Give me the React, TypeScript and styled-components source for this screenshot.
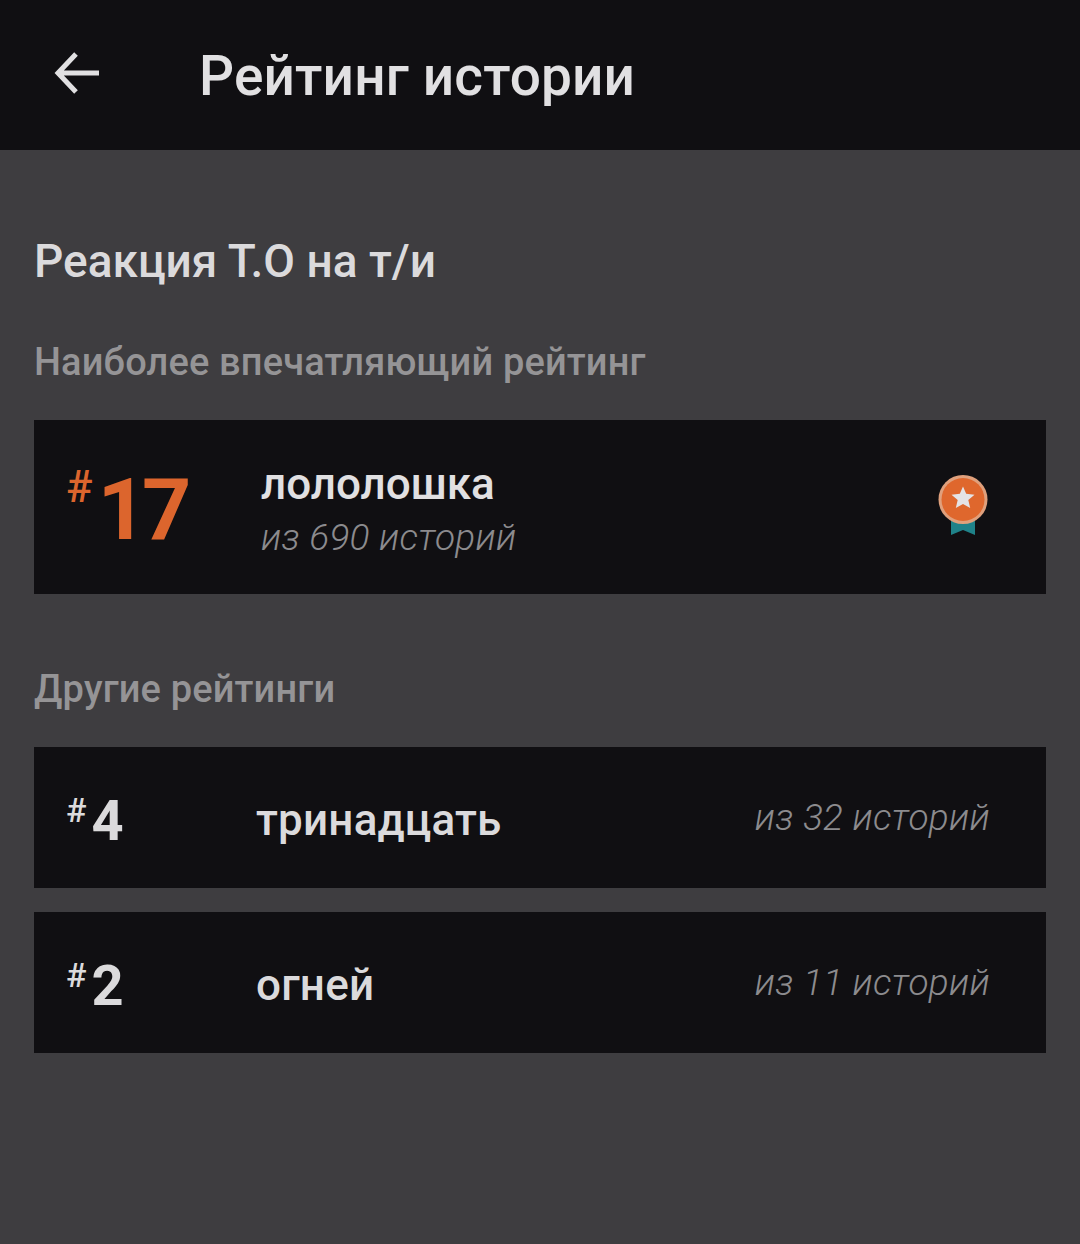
import React from 'react';
import styled, {createGlobalStyle} from 'styled-components'

const GlobalStyle = createGlobalStyle`
  html, body {
    margin: 0;
    padding: 0;
    background: #3e3d40;
  }
  body {
    font-family: Roboto, "Noto Sans", sans-serif;
  }
`

const Page = styled.div`
  width: 1080px;
  height: 1244px;
  background: #3e3d40;
  overflow: hidden;
`

const Header = styled.header`
  height: 150px;
  background: #100f12;
  display: flex;
  align-items: center;
  padding-left: 54px;
  box-sizing: border-box;
`

const BackIcon = styled.svg`
  width: 48px;
  height: 48px;
  flex: none;
  margin-top: -5px;
`

const Title = styled.h1`
  margin: 1px 0 0 97px;
  font-size: 55px;
  letter-spacing: 0.15px;
  font-weight: 500;
  color: #e1e0e2;
  line-height: 60px;
`

const Content = styled.main`
  padding: 81px 34px 0;
`

const StoryName = styled.h2`
  margin: 0;
  font-size: 46px;
  line-height: 60px;
  font-weight: 500;
  color: #dbdadc;
`

const SectionLabel = styled.div<{ $top: number }>`
  margin-top: ${({$top}) => $top}px;
  font-size: 38px;
  letter-spacing: 0.15px;
  line-height: 44px;
  font-weight: 500;
  color: #959496;
`

const BestCard = styled.div`
  margin-top: 36px;
  height: 174px;
  background: #100f12;
  display: flex;
  align-items: center;
  padding: 0 58px 0 33px;
`

const Rank = styled.div<{ $big?: boolean }>`
  width: ${({$big}) => ($big ? 194 : 190)}px;
  flex: none;
  display: flex;
  align-items: flex-start;
  color: ${({$big}) => ($big ? '#dc652d' : '#dbdadc')};
`

const Hash = styled.span<{ $big?: boolean }>`
  font-size: ${({$big}) => ($big ? 44 : 34)}px;
  line-height: ${({$big}) => ($big ? 44 : 36)}px;
  font-weight: 500;
  margin-left: -1px;
  margin-right: ${({$big}) => ($big ? 5 : 5)}px;
  margin-top: ${({$big}) => ($big ? 7 : 9)}px;
`

const RankNumber = styled.span<{ $big?: boolean }>`
  font-size: ${({$big}) => ($big ? 86 : 56)}px;
  letter-spacing: ${({$big}) => ($big ? -5 : 0)}px;
  line-height: ${({$big}) => ($big ? 92 : 62)}px;
  font-weight: 700;
  margin-top: ${({$big}) => ($big ? 6 : 7)}px;
`

const BestText = styled.div`
  flex: 1;
  display: flex;
  flex-direction: column;
  padding-top: 6px;
`

const BestName = styled.div`
  font-size: 44px;
  line-height: 52px;
  font-weight: 500;
  color: #e1e0e2;
`

const OfStories = styled.div<{ $best?: boolean }>`
  font-size: 37px;
  line-height: 48px;
  letter-spacing: 0.3px;
  font-weight: 300;
  font-style: italic;
  color: #8c8b8e;
  margin-top: ${({$best}) => ($best ? 4 : 0)}px;
`

const Medal = styled.svg`
  width: 50px;
  height: 62px;
  flex: none;
  margin-top: -2px;
`

const List = styled.div`
  margin-top: 36px;
  display: flex;
  flex-direction: column;
  gap: 24px;
`

const Row = styled.div`
  height: 141px;
  background: #100f12;
  display: flex;
  align-items: center;
  padding: 0 56px 0 33px;
`

const RowName = styled.div`
  flex: 1;
  font-size: 44px;
  letter-spacing: 0.2px;
  font-weight: 500;
  color: #dbdadc;
  line-height: 52px;
  margin-top: 5px;
  margin-left: -1px;
`

const items = [
    {rank: 4, name: 'тринадцать', total: 'из 32 историй'},
    {rank: 2, name: 'огней', total: 'из 11 историй'},
]

const App: React.FC = () => {
    return (
        <Page>
            <GlobalStyle/>
            <Header>
                <BackIcon viewBox="0 0 48 48" fill="none">
                    <path d="M45 24H5M22 5L4 24l18 19" stroke="#e1e0e2" strokeWidth="5"/>
                </BackIcon>
                <Title>Рейтинг истории</Title>
            </Header>
            <Content>
                <StoryName>Реакция Т.О на т/и</StoryName>
                <SectionLabel $top={49}>Наиболее впечатляющий рейтинг</SectionLabel>
                <BestCard>
                    <Rank $big>
                        <Hash $big>#</Hash>
                        <RankNumber $big>17</RankNumber>
                    </Rank>
                    <BestText>
                        <BestName>лололошка</BestName>
                        <OfStories $best>из 690 историй</OfStories>
                    </BestText>
                    <Medal viewBox="0 0 50 62">
                        <path d="M13 42H37V60L25 55L13 60Z" fill="#1f8289"/>
                        <circle cx="25" cy="24.5" r="24.5" fill="#e0a07c"/>
                        <circle cx="25" cy="24.5" r="21.5" fill="#df672d"/>
                        <path d="M25 11.5L28.2 18.8L36.5 19.8L30.3 25L32.2 33L25 28.9L17.8 33L19.7 25L13.5 19.8L21.8 18.8Z" fill="#e4e3e6"/>
                    </Medal>
                </BestCard>
                <SectionLabel $top={73}>Другие рейтинги</SectionLabel>
                <List>
                    {
                        items.map(item => {
                            return (
                                <Row key={item.name}>
                                    <Rank>
                                        <Hash>#</Hash>
                                        <RankNumber>{item.rank}</RankNumber>
                                    </Rank>
                                    <RowName>{item.name}</RowName>
                                    <OfStories>{item.total}</OfStories>
                                </Row>
                            )
                        })
                    }
                </List>
            </Content>
        </Page>
    );
};

export default App;
